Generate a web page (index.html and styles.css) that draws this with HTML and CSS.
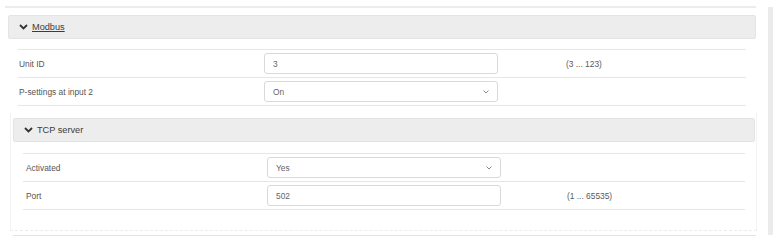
FILE: index.html
```html
<!DOCTYPE html>
<html>
<head>
<meta charset="utf-8">
<link rel="stylesheet" href="styles.css">
</head>
<body>
<div class="page">
  <div class="panel">
    <div class="topline"></div>
    <div class="group modbus">
      <div class="ghead">
        <svg class="chev" width="9" height="6" viewBox="0 0 9 6"><path d="M1 1 L4.5 4.5 L8 1" fill="none" stroke="#333" stroke-width="1.8"/></svg>
        <span class="gtitle link">Modbus</span>
      </div>
      <div class="rows">
        <div class="row">
          <span class="label">Unit ID</span>
          <div class="field">3</div>
          <span class="range">(3 ... 123)</span>
        </div>
        <div class="row">
          <span class="label">P-settings at input 2</span>
          <div class="field select">On<svg width="6" height="4" viewBox="0 0 6 4"><path d="M0.5 0.5 L3 3 L5.5 0.5" fill="none" stroke="#888" stroke-width="1"/></svg></div>
          <span class="range"></span>
        </div>
      </div>
    </div>
    <div class="group tcp">
      <div class="ghead">
        <svg class="chev" width="9" height="6" viewBox="0 0 9 6"><path d="M1 1 L4.5 4.5 L8 1" fill="none" stroke="#333" stroke-width="1.8"/></svg>
        <span class="gtitle">TCP server</span>
      </div>
      <div class="rows">
        <div class="row">
          <span class="label">Activated</span>
          <div class="field select">Yes<svg width="6" height="4" viewBox="0 0 6 4"><path d="M0.5 0.5 L3 3 L5.5 0.5" fill="none" stroke="#888" stroke-width="1"/></svg></div>
          <span class="range"></span>
        </div>
        <div class="row">
          <span class="label">Port</span>
          <div class="field">502</div>
          <span class="range">(1 ... 65535)</span>
        </div>
      </div>
    </div>
    <div class="bottomline"></div>
  </div>
  <div class="scroll"></div>
</div>
</body>
</html>
```

FILE: styles.css
```css
html, body {
  margin: 0;
  padding: 0;
  background: #fff;
}
body {
  font-family: "Liberation Sans", Arial, Helvetica, sans-serif;
  color: #444;
}
.page {
  display: flex;
  align-items: flex-start;
  padding-top: 6px;
}
.panel {
  width: 752px;
  margin-left: 5px;
}
.topline {
  height: 2px;
  background: #ececec;
  margin-right: 1px;
}
.scroll {
  width: 5px;
  height: 228px;
  margin-top: 1px;
  margin-left: 11px;
  background: #ebebeb;
}
.ghead {
  display: flex;
  align-items: center;
  height: 22px;
  background: #ededed;
  border: 1px solid #e4e4e4;
  border-radius: 2px;
}
.chev {
  display: block;
}
.gtitle {
  font-size: 9.2px;
  color: #3c3c3c;
  margin-left: 4px;
}
.gtitle.link {
  text-decoration: underline;
}
.modbus {
  margin-top: 7px;
  margin-left: 3px;
  margin-right: 1px;
}
.modbus .ghead {
  padding-left: 10px;
}
.modbus .rows {
  margin: 10px 10px 0 10px;
}
.tcp {
  margin-top: 7px;
  margin-left: 5px;
  padding: 5px 1px 20px 2px;
  border-left: 1px solid #f3f3f3;
  border-right: 1px solid #f3f3f3;
  border-bottom: 1px dashed #ececec;
}
.tcp .ghead {
  padding-left: 10px;
}
.tcp .rows {
  margin: 11px 10px 0 10px;
}
.row {
  display: flex;
  align-items: center;
  height: 27px;
  border-top: 1px solid #e6e6e6;
}
.row:last-child {
  border-bottom: 1px solid #e6e6e6;
}
.label {
  font-size: 8.4px;
  color: #555;
  padding-left: 1px;
  width: 245px;
  flex: none;
}
.tcp .label {
  padding-left: 3px;
  width: 241px;
}
.field {
  box-sizing: border-box;
  width: 234px;
  height: 21px;
  flex: none;
  border: 1px solid #d9d9d9;
  border-radius: 3px;
  background: #fff;
  font-size: 8.4px;
  color: #666;
  padding: 0 8px;
  display: flex;
  align-items: center;
  justify-content: space-between;
}
.field svg {
  display: block;
}
.range {
  font-size: 8.4px;
  color: #5a5a5a;
  margin-left: 68px;
}
.tcp .range {
  margin-left: 66px;
}
.bottomline {
  height: 1px;
  background: #e4e4e4;
  margin: 4px 1px 0 8px;
}
```
